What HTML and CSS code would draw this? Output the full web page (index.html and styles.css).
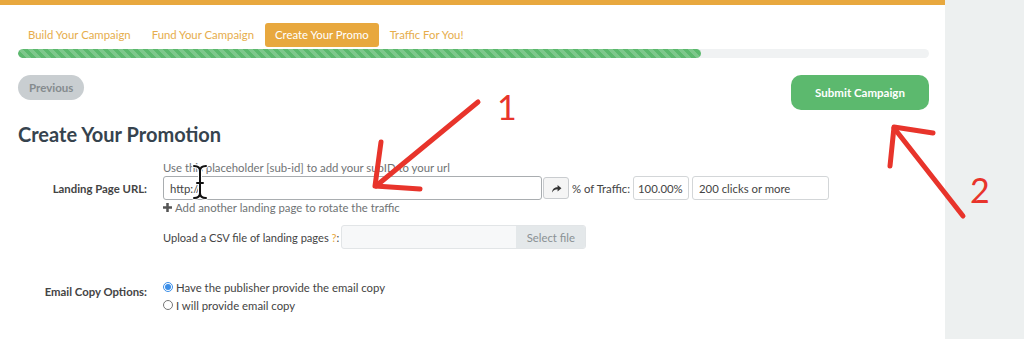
FILE: index.html
```html
<!DOCTYPE html>
<html lang="en">
<head>
  <meta charset="UTF-8">
  <title>Create Your Promo</title>
  <link rel="stylesheet" href="styles.css">
</head>
<body>
  <div class="page">
    <div class="steps">
      <span class="step">Build Your Campaign</span>
      <span class="step">Fund Your Campaign</span>
      <span class="step active">Create Your Promo</span>
      <span class="step">Traffic For You!</span>
    </div>
    <div class="progress">
      <div class="progress-bar" style="width: 75%"></div>
    </div>

    <div class="actions">
      <button class="btn-prev">Previous</button>
      <button class="btn-submit">Submit Campaign</button>
    </div>

    <h1 class="page-title">Create Your Promotion</h1>

    <p class="field-note">Use this placeholder [sub-id] to add your subID to your url</p>
    <div class="form-row">
      <label class="form-label">Landing Page URL:</label>
      <input class="text-input url-input" type="text" value="http://">
      <button class="icon-btn">
        <svg width="11" height="9" viewBox="0 0 12 10">
          <path d="M1 9.5C1.3 5.6 4 3.6 7.2 3.6V1l4.3 3.7-4.3 3.7V5.9C4.6 5.9 2.6 7 1 9.5z" fill="#333"></path>
        </svg>
      </button>
      <span class="traffic-label">% of Traffic:</span>
      <input class="text-input pct-input" type="text" value="100.00%">
      <input class="text-input clicks-input" type="text" value="200 clicks or more">
    </div>
    <div class="add-link">
      <svg width="9" height="9" viewBox="0 0 10 10">
        <path d="M3.6 0h2.8v3.6H10v2.8H6.4V10H3.6V6.4H0V3.6h3.6z" fill="#555"></path>
      </svg>
      Add another landing page to rotate the traffic
    </div>

    <div class="upload-row">
      <span class="upload-label">Upload a CSV file of landing pages <span class="hint">?</span>:</span>
      <div class="file-box">
        <span class="file-btn">Select file</span>
      </div>
    </div>

    <div class="form-row email-row">
      <label class="form-label">Email Copy Options:</label>
      <div class="radio-list">
        <label class="radio"><input type="radio" name="copy" checked> Have the publisher provide the email copy</label>
        <label class="radio"><input type="radio" name="copy"> I will provide email copy</label>
      </div>
    </div>
  </div>

  <svg class="annotations" width="1024" height="339" viewBox="0 0 1024 339">
    <g stroke="#e8342b" stroke-width="5" stroke-linecap="round" stroke-linejoin="round" fill="none">
      <path d="M478 102L376 186"></path>
      <path d="M381 142L375 186L420 189"></path>
      <path d="M963 216L894 128"></path>
      <path d="M933 133L894 127L890 166"></path>
    </g>
    <text class="mark" x="497" y="120">1</text>
    <text class="mark" x="970" y="203">2</text>
    <g fill="none" stroke-linecap="round">
      <path d="M194 166Q200 166 200 171Q200 166 206 166M200 171V193M194 198Q200 198 200 193Q200 198 206 198M197 183H203" stroke="#fff" stroke-width="4"></path>
      <path d="M194 166Q200 166 200 171Q200 166 206 166M200 171V193M194 198Q200 198 200 193Q200 198 206 198M197 183H203" stroke="#111" stroke-width="2"></path>
    </g>
  </svg>
</body>
</html>
```

FILE: styles.css
```css
:root {
  --orange: #e8a83e;
  --orange-text: #e6ad4c;
  --green: #5cb96e;
  --dark: #36434e;
  --text: #444;
  --muted: #6f7375;
  --bg: #edf0f0;
}

* {
  box-sizing: border-box;
}

body {
  margin: 0;
  position: relative;
  font-family: 'Lato', 'Open Sans', sans-serif;
  font-size: 11.35px;
  color: var(--text);
  background-color: var(--bg);
}

.page {
  width: 945px;
  min-height: 339px;
  background: #fff;
  border-top: 5px solid var(--orange);
  padding: 18px 16px 0 18px;
}

.steps {
  display: flex;
  gap: 1px;
}

.step {
  padding: 5px 10px;
  line-height: 14px;
  color: var(--orange-text);
  border-radius: 3px;
}

.step.active {
  background-color: var(--orange);
  color: #fff;
}

.progress {
  margin-top: 2px;
  height: 9px;
  border-radius: 5px;
  background-color: #f0f2f3;
  overflow: hidden;
}

.progress-bar {
  height: 100%;
  border-radius: 5px;
  background-color: var(--green);
  background-image: linear-gradient(45deg, rgba(255,255,255,0.2) 25%, transparent 25%, transparent 50%, rgba(255,255,255,0.2) 50%, rgba(255,255,255,0.2) 75%, transparent 75%, transparent);
  background-size: 10px 10px;
}

.actions {
  display: flex;
  justify-content: space-between;
  align-items: flex-start;
  margin-top: 17px;
}

.btn-prev,
.btn-submit {
  border: none;
  font-family: inherit;
  font-size: 11.5px;
  font-weight: 700;
  cursor: pointer;
}

.btn-prev {
  height: 25px;
  padding: 0 11px;
  border-radius: 13px;
  background-color: #c9ced1;
  color: #858b8e;
}

.btn-submit {
  width: 138px;
  height: 35px;
  border-radius: 10px;
  background-color: var(--green);
  color: #fff;
}

.page-title {
  margin: 12px 0 0;
  font-size: 20px;
  line-height: 24px;
  font-weight: 700;
  color: var(--dark);
}

.field-note {
  margin: 15px 0 0 145px;
  line-height: 13px;
  color: var(--muted);
}

.form-row {
  display: flex;
  align-items: center;
  margin-top: 2px;
}

.form-label {
  width: 145px;
  padding-right: 16px;
  text-align: right;
  font-weight: 700;
  color: var(--text);
  flex-shrink: 0;
}

.text-input {
  height: 24px;
  padding: 0 6px;
  border: 1px solid #d3d6d8;
  border-radius: 3px;
  font-family: inherit;
  font-size: 11.35px;
  color: var(--text);
}

.url-input {
  width: 379px;
  border-color: #a9adb0;
}

.icon-btn {
  width: 26px;
  height: 22px;
  margin-left: 1px;
  display: flex;
  align-items: center;
  justify-content: center;
  background-color: #f5f5f5;
  border: 1px solid #c9cccf;
  border-radius: 3px;
  padding: 0;
}

.traffic-label {
  margin: 0 3px;
}

.pct-input {
  width: 56px;
  padding: 0 4px;
}

.clicks-input {
  width: 137px;
  margin-left: 3px;
}

.add-link {
  display: flex;
  align-items: center;
  gap: 3px;
  margin: 1px 0 0 145px;
  line-height: 13px;
  color: var(--muted);
}

.upload-row {
  display: flex;
  align-items: center;
  margin-top: 11px;
  padding-left: 145px;
}

.upload-label {
  font-size: 11.1px;
  margin-right: 2px;
}

.hint {
  color: var(--orange);
}

.file-box {
  display: flex;
  width: 245px;
  height: 24px;
  border: 1px solid #e2e5e7;
  border-radius: 3px;
  background-color: #f7f8f9;
  overflow: hidden;
}

.file-btn {
  margin-left: auto;
  width: 69px;
  display: flex;
  align-items: center;
  justify-content: center;
  background-color: #e4e8ea;
  color: #8a9194;
}

.email-row {
  align-items: flex-start;
  margin-top: 29px;
}

.email-row .form-label {
  margin-top: 7px;
  line-height: 13px;
}

.radio-list {
  display: flex;
  flex-direction: column;
}

.radio {
  display: flex;
  align-items: center;
  gap: 3px;
  height: 18px;
}

.radio input {
  width: 10px;
  height: 10px;
  margin: 0;
  accent-color: #3b8ee8;
}

.annotations {
  position: absolute;
  top: 0;
  left: 0;
  pointer-events: none;
}

.mark {
  font-family: 'Lato', 'Open Sans', sans-serif;
  font-size: 34px;
  font-weight: 400;
  fill: #e8342b;
}
```
